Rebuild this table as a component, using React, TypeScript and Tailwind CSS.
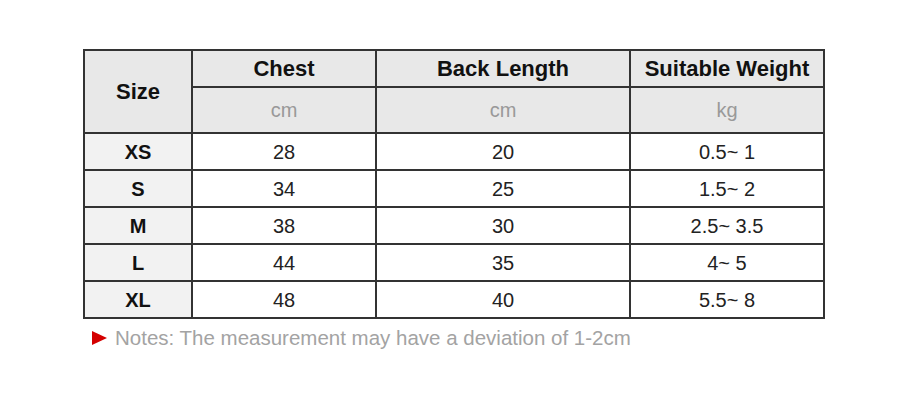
const rows = [
  { size: "XS", chest: "28", back: "20", weight: "0.5~ 1" },
  { size: "S", chest: "34", back: "25", weight: "1.5~ 2" },
  { size: "M", chest: "38", back: "30", weight: "2.5~ 3.5" },
  { size: "L", chest: "44", back: "35", weight: "4~ 5" },
  { size: "XL", chest: "48", back: "40", weight: "5.5~ 8" },
];

const cell = "border-2 border-[#333] text-center p-0";

export default function App() {
  return (
    <div className="w-[905px] h-[400px] bg-white pt-[49px] pl-[83px] font-['Liberation_Sans',Arial,sans-serif]">
      <table className="border-collapse table-fixed w-[740px]">
        <colgroup>
          <col className="w-[108px]" />
          <col className="w-[184px]" />
          <col className="w-[254px]" />
          <col className="w-[194px]" />
        </colgroup>
        <thead>
          <tr className="h-[37px] bg-[#e8e8e8]">
            <th rowSpan={2} className={`${cell} text-[22px] font-bold text-[#111]`}>
              Size
            </th>
            <th className={`${cell} text-[22px] font-bold text-[#111]`}>Chest</th>
            <th className={`${cell} text-[22px] font-bold text-[#111]`}>Back Length</th>
            <th className={`${cell} text-[22px] font-bold text-[#111]`}>Suitable Weight</th>
          </tr>
          <tr className="h-[46px] bg-[#e8e8e8]">
            <th className={`${cell} text-[20px] font-normal text-[#999]`}>cm</th>
            <th className={`${cell} text-[20px] font-normal text-[#999]`}>cm</th>
            <th className={`${cell} text-[20px] font-normal text-[#999]`}>kg</th>
          </tr>
        </thead>
        <tbody>
          {rows.map((r) => (
            <tr key={r.size} className="h-[37px] text-[20px] text-[#222]">
              <td className={`${cell} bg-[#f2f2f2] font-bold text-[#111]`}>{r.size}</td>
              <td className={cell}>{r.chest}</td>
              <td className={cell}>{r.back}</td>
              <td className={cell}>{r.weight}</td>
            </tr>
          ))}
        </tbody>
      </table>
      <div className="flex items-center gap-[8px] mt-[4px] ml-[9px] text-[20.5px] text-[#a3a3a3]">
        <span className="w-0 h-0 border-y-[7.5px] border-y-transparent border-l-[15px] border-l-[#d40000]" />
        <span>Notes: The measurement may have a deviation of 1-2cm</span>
      </div>
    </div>
  );
}
